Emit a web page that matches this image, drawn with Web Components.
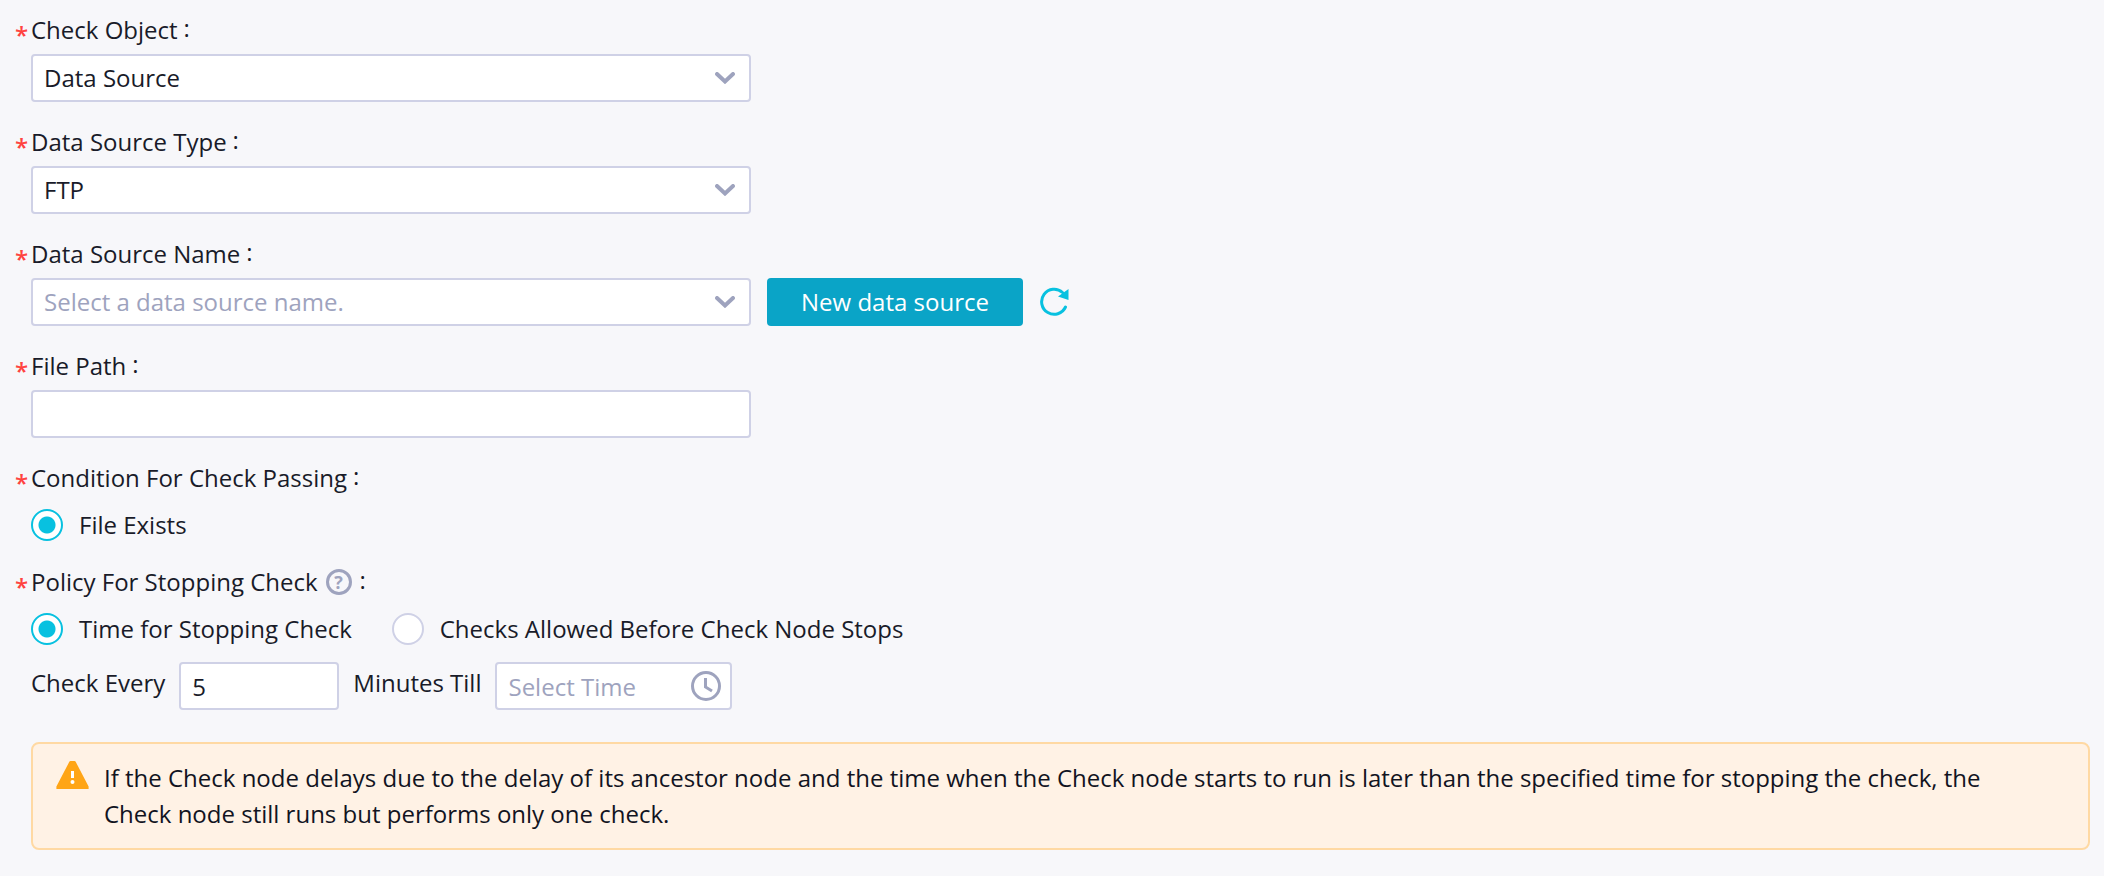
<!DOCTYPE html>
<html lang="en">
<head>
<meta charset="utf-8">
<meta name="viewport" content="width=device-width, initial-scale=1">
<title>Check node settings</title>
<style>
  :root {
    --text: #191b29;
    --muted: #9ea3be;
    --line: #cfd1e6;
    --accent: #08c1e0;
    --primary: #0aa4c7;
    --required: #ff4340;
  }
  body {
    margin: 0;
    background: #f7f7fa;
    color: var(--text);
    font: 24px/36px "Open Sans", "Noto Sans", sans-serif;
  }
</style>
</head>
<body>
<check-form></check-form>

<script>
const control = `
  input, select {
    box-sizing: border-box; display: block; width: 100%; height: 48px; margin: 0;
    padding: 0 11px; border: 2px solid var(--line); border-radius: 4px;
    background: #fff; color: inherit; font: inherit; outline: 0;
  }
  input::placeholder { color: var(--muted); opacity: 1; }
`;

function define(name, html, setup) {
  const template = document.createElement('template');
  template.innerHTML = html;
  customElements.define(name, class extends HTMLElement {
    constructor() {
      super();
      this.attachShadow({ mode: 'open' }).append(template.content.cloneNode(true));
    }
    connectedCallback() {
      if (setup && !this.ready) { this.ready = true; setup(this, this.shadowRoot); }
    }
  });
}

/* Heading of a field: required mark, caption, optional icon, colon */
define('field-caption', `
  <style>
    :host { display: flex; height: 36px; }
    .mark { width: 16px; color: var(--required); font-weight: 600; line-height: 46px; }
    .colon { margin-left: 6px; line-height: 32px; }
    ::slotted([slot=icon]) { margin: 0 2px 0 8px; align-self: center; }
  </style>
  <span class="mark">*</span><slot></slot><slot name="icon"></slot><span class="colon">:</span>
`);

define('help-tip', `
  <style>
    :host { display: block; }
    button {
      box-sizing: border-box; display: block; width: 26px; height: 26px; padding: 0;
      border: 3px solid var(--muted); border-radius: 50%; background: none;
      color: var(--muted); font: bold 18px/20px "Open Sans", sans-serif; text-align: center;
    }
  </style>
  <button type="button" aria-label="Help">?</button>
`);

define('select-field', `
  <style>
    ${control}
    :host { display: block; }
    label { display: block; margin-bottom: 6px; }
    .row { display: flex; align-items: center; gap: 16px; padding-left: 16px; }
    .box { display: grid; width: 720px; align-items: center; }
    .box > * { grid-area: 1 / 1; }
    select { appearance: none; padding-right: 48px; }
    select.empty { color: var(--muted); }
    svg { justify-self: end; margin-right: 16px; pointer-events: none; }
  </style>
  <label for="s"><field-caption></field-caption></label>
  <div class="row">
    <div class="box">
      <select id="s"></select>
      <svg width="20" height="12" viewBox="0 0 20 12" fill="none" stroke="#9ea3be" stroke-width="4" stroke-linecap="round"><path d="M2 2l8 7.500l8-7.500"/></svg>
    </div>
    <slot></slot>
  </div>
`, (host, root) => {
  root.querySelector('field-caption').textContent = host.getAttribute('label');
  const select = root.querySelector('select');
  const hint = host.getAttribute('placeholder');
  select.add(new Option(hint || host.getAttribute('value')));
  select.classList.toggle('empty', Boolean(hint));
});

define('text-field', `
  <style>
    ${control}
    :host { display: block; }
    label { display: block; margin-bottom: 6px; }
    .row { padding-left: 16px; }
    input { width: 720px; }
  </style>
  <label for="t"><field-caption></field-caption></label>
  <div class="row"><input id="t" type="text"></div>
`, (host, root) => {
  root.querySelector('field-caption').textContent = host.getAttribute('label');
});

define('primary-button', `
  <style>
    :host { display: block; }
    button {
      display: block; width: 256px; height: 48px; padding: 0; border: 0; border-radius: 4px;
      background: var(--primary); color: #fff; font: inherit;
    }
  </style>
  <button type="button"><slot></slot></button>
`);

define('refresh-button', `
  <style>
    :host { display: block; }
    button { display: block; padding: 0; border: 0; background: none; }
    svg { display: block; }
  </style>
  <button type="button" aria-label="Refresh">
    <svg width="32" height="30" viewBox="1 0 32 30" fill="none" stroke="#08c1e0" stroke-width="3" stroke-linecap="round">
      <path d="M27.500 20A12.500 12.500 0 1 1 24.500 5.500"/>
      <path d="M30.500 2V13L20 9.500z" fill="#08c1e0" stroke="none"/>
    </svg>
  </button>
`);

define('radio-set', `
  <style>
    :host { display: block; }
    fieldset { margin: 0; padding: 0; border: 0; min-width: 0; }
    legend { padding: 0; margin-bottom: 12px; }
    .row { display: flex; flex-wrap: wrap; gap: 40px; padding-left: 16px; }
    label { display: flex; align-items: center; gap: 16px; height: 34px; }
    input {
      appearance: none; box-sizing: border-box; width: 32px; height: 32px; margin: 0;
      border: 2px solid var(--line); border-radius: 50%; background: #fff;
    }
    input:checked {
      border-color: var(--accent);
      background: radial-gradient(circle, var(--accent) 8px, #fff 9px);
    }
  </style>
  <fieldset>
    <legend><field-caption></field-caption></legend>
    <div class="row"></div>
  </fieldset>
`, (host, root) => {
  const caption = root.querySelector('field-caption');
  caption.append(host.getAttribute('label'));
  if (host.hasAttribute('help')) {
    const tip = document.createElement('help-tip');
    tip.slot = 'icon';
    caption.append(tip);
  }
  host.getAttribute('options').split('|').forEach((text, i) => {
    const label = document.createElement('label');
    const input = document.createElement('input');
    input.type = 'radio';
    input.name = 'choice';
    input.checked = i === 0;
    label.append(input, text);
    root.querySelector('.row').append(label);
  });
});

define('check-schedule', `
  <style>
    ${control}
    :host { display: flex; gap: 14px; padding-left: 16px; }
    label { line-height: 42px; }
    .every { width: 160px; }
    .till { display: grid; width: 237px; align-items: center; }
    .till > * { grid-area: 1 / 1; }
    svg { justify-self: end; margin-right: 11px; pointer-events: none; }
  </style>
  <label for="every">Check Every</label>
  <div class="every"><input id="every" type="text" inputmode="numeric" value="5"></div>
  <label for="till">Minutes Till</label>
  <div class="till">
    <input id="till" type="text" placeholder="Select Time">
    <svg width="30" height="30" viewBox="0 0 30 30" fill="none" stroke="#9ea3be" stroke-width="3"><circle cx="15" cy="15" r="13.500"/><path d="M14.500 7v9l6.500 4"/></svg>
  </div>
`);

define('alert-note', `
  <style>
    :host {
      display: flex; gap: 15px; padding: 16px 64px 16px 23px;
      border: 2px solid #ffd9a3; border-radius: 8px; background: #fff2e5; color: #12141f;
    }
    svg { flex: none; margin-top: 1px; }
    p { margin: 0; }
  </style>
  <svg width="33" height="28" viewBox="0 0 33 28"><path d="M14.500 0h4q.8 0 1.200.8L32.600 25.500V28H.4V25.500L13.300.8q.4-.8 1.200-.8z" fill="#ffa516"/><path d="M15 10h3v7h-3z" fill="#fff"/><circle cx="16.500" cy="21" r="2" fill="#fff"/></svg>
  <p><slot></slot></p>
`);

define('check-form', `
  <style>
    :host { display: block; padding: 12px 14px 24px 15px; }
    form { display: flex; flex-direction: column; gap: 22px; }
    .policy { display: flex; flex-direction: column; gap: 16px; }
    alert-note { margin: 10px 0 0 16px; }
  </style>
  <form>
    <select-field label="Check Object" value="Data Source"></select-field>
    <select-field label="Data Source Type" value="FTP"></select-field>
    <select-field label="Data Source Name" placeholder="Select a data source name.">
      <primary-button>New data source</primary-button>
      <refresh-button></refresh-button>
    </select-field>
    <text-field label="File Path"></text-field>
    <radio-set label="Condition For Check Passing" options="File Exists"></radio-set>
    <div class="policy">
      <radio-set label="Policy For Stopping Check" help options="Time for Stopping Check|Checks Allowed Before Check Node Stops"></radio-set>
      <check-schedule></check-schedule>
    </div>
    <alert-note>If the Check node delays due to the delay of its ancestor node and the time when the Check node starts to run is later than the specified time for stopping the check, the Check node still runs but performs only one check.</alert-note>
  </form>
`);
</script>
</body>
</html>
